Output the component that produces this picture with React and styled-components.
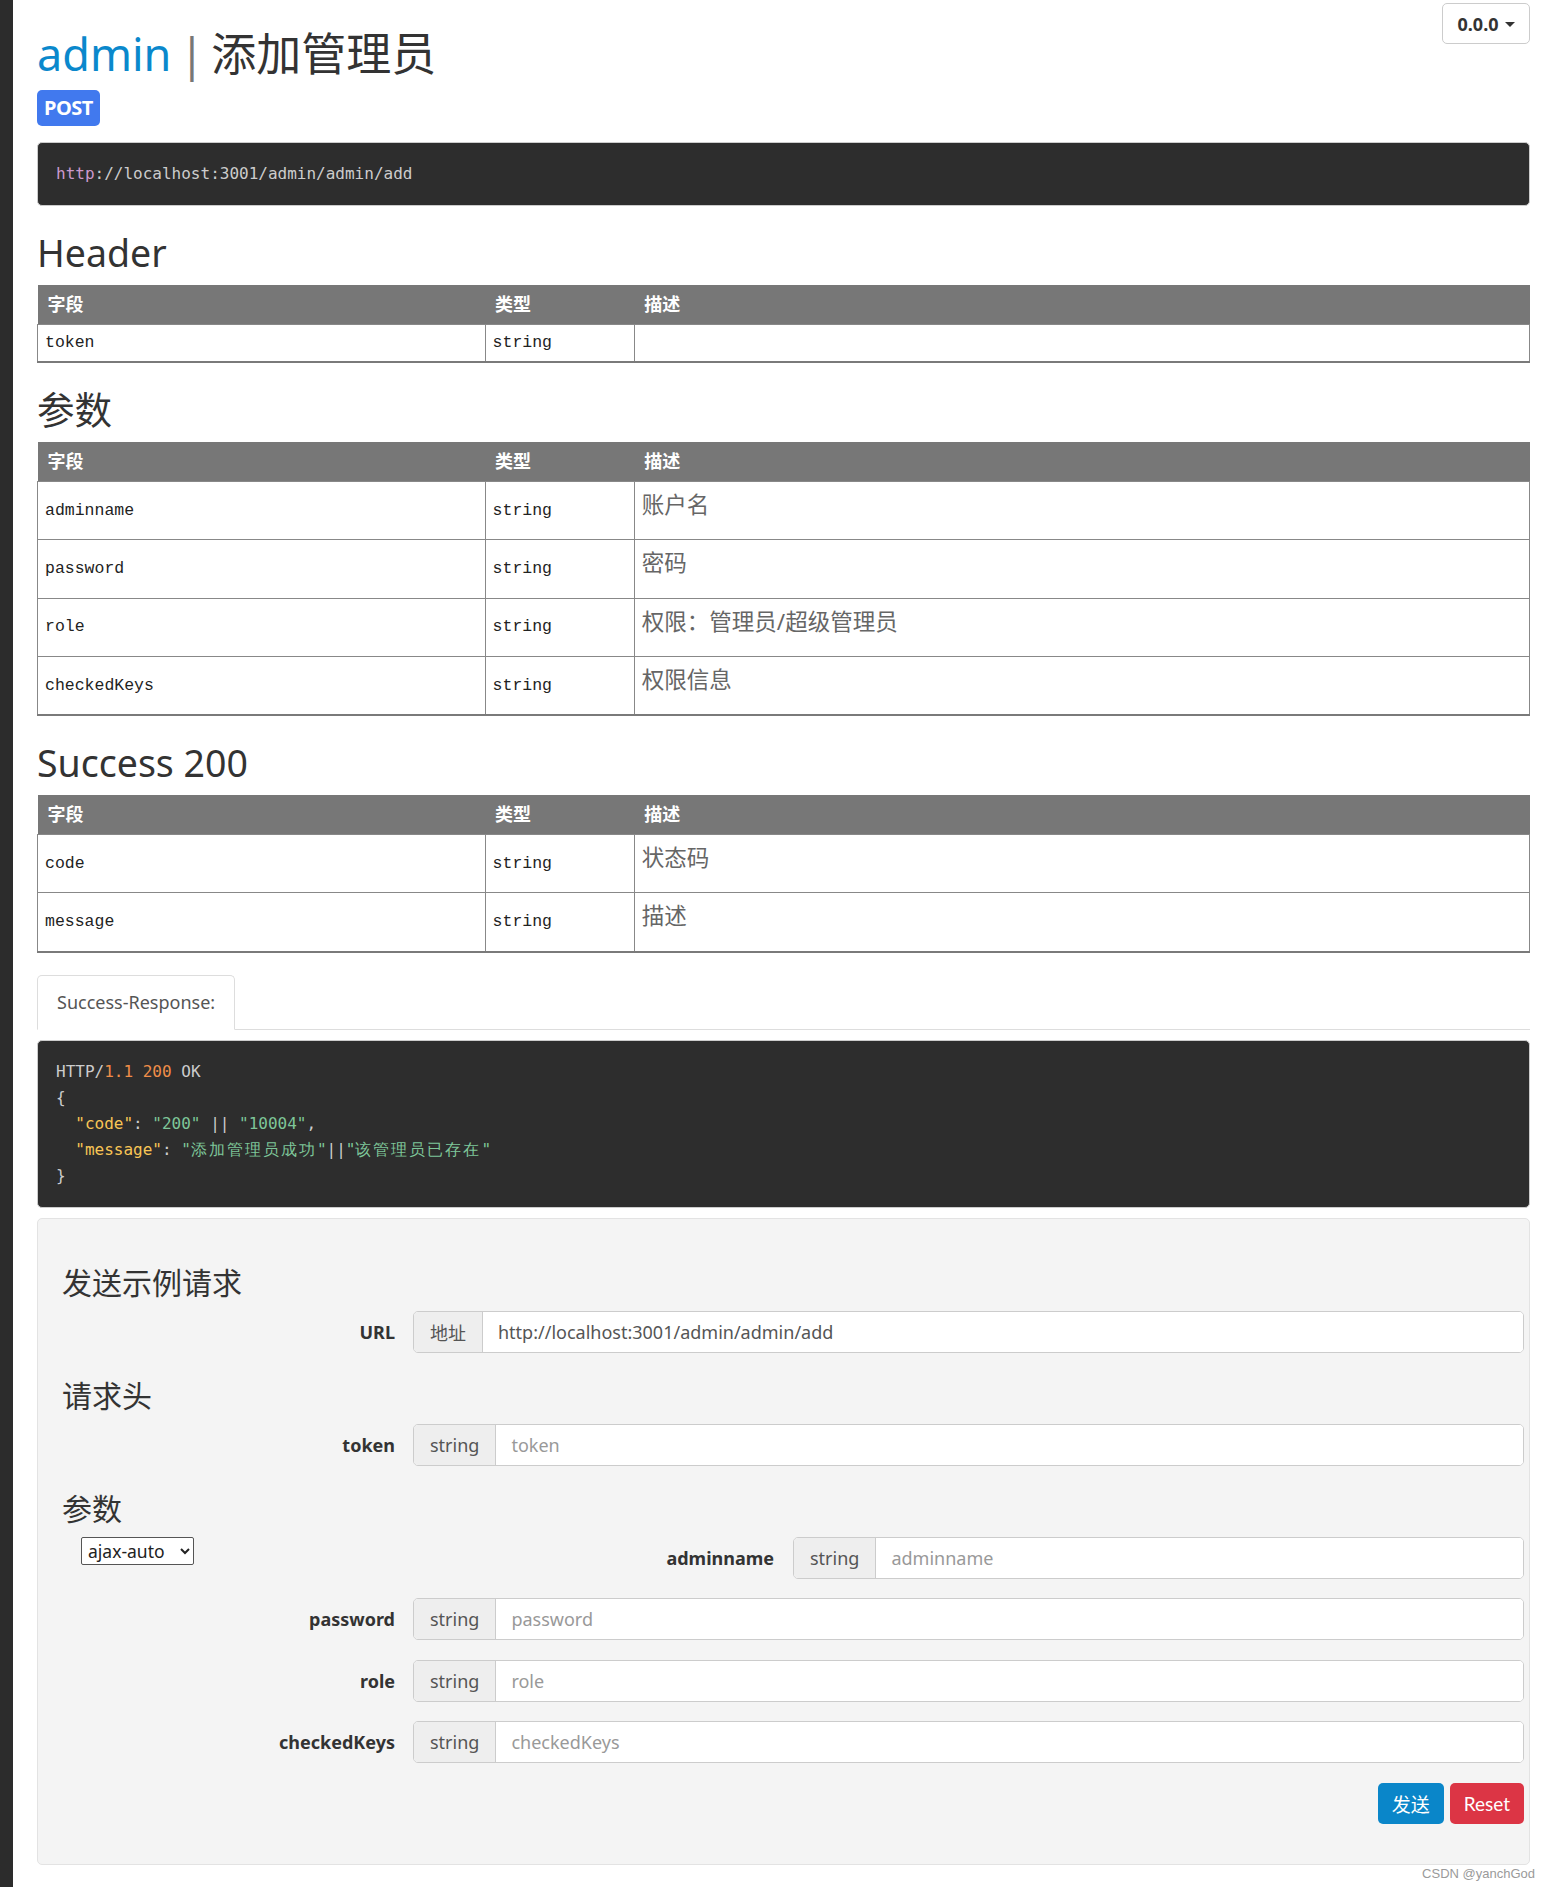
import React from 'react'
import styled, { createGlobalStyle } from 'styled-components'

const GlobalStyle = createGlobalStyle`
  html, body {
    margin: 0;
    padding: 0;
    background: #fff;
    font-family: "Noto Sans", "Noto Sans CJK SC", sans-serif;
    color: #333;
  }
`

const Page = styled.div`
  position: relative;
  display: flex;
  min-height: 1887px;
`

const Sidebar = styled.div`
  width: 13px;
  flex-shrink: 0;
  background: #2c2c2c;
`

const Main = styled.div`
  flex: 1;
  min-width: 0;
  padding: 3px 19px 0 24px;
`

const TopBar = styled.div`
  display: flex;
  justify-content: space-between;
  align-items: flex-start;
`

const Title = styled.h1`
  margin: 26px 0 0;
  font-size: 45px;
  font-weight: 400;
  line-height: 50px;
  color: #333;
`

const Group = styled.span`
  color: #0a88cc;
`

const Sep = styled.span`
  color: #777;
  margin: 0 7px 0 8px;
`

const VersionButton = styled.button`
  display: flex;
  align-items: center;
  gap: 6px;
  height: 41px;
  width: 88px;
  justify-content: center;
  background: #fff;
  border: 1px solid #ccc;
  border-radius: 5px;
  font-family: "Noto Sans", sans-serif;
  font-weight: 700;
  font-size: 18px;
  color: #333;
  padding: 0;
`

const Caret = styled.span`
  width: 0;
  height: 0;
  border-left: 5px solid transparent;
  border-right: 5px solid transparent;
  border-top: 5px solid #333;
  margin-top: 2px;
`

const Badge = styled.span`
  display: inline-block;
  margin-top: 11px;
  padding: 0 7px;
  height: 36px;
  line-height: 36px;
  border-radius: 5px;
  background: #4179ee;
  color: #fff;
  font-weight: 700;
  font-size: 20px;
  letter-spacing: -0.5px;
`

const Pre = styled.pre`
  margin: ${({ $top }) => $top}px 0 0;
  padding: 18px;
  background: #2d2d2d;
  border: 1px solid #ccc;
  border-radius: 5px;
  color: #ccc;
  font-family: "DejaVu Sans Mono", monospace;
  font-size: 16px;
  line-height: 26px;
  white-space: pre;
`

const Tok = styled.span`
  color: ${({ $c }) => $c};
`

// CJK glyphs take two monospace cells in the reference
const Wide = styled.span`
  letter-spacing: 2px;
`

const SectionTitle = styled.h2`
  margin: 26px 0 12px;
  font-size: 37.5px;
  font-weight: 400;
  line-height: 41px;
  color: #333;
`

const Table = styled.table`
  width: 100%;
  border-collapse: collapse;
  border-bottom: 2px solid #7a7a7a;
  table-layout: fixed;
`

const Th = styled.th`
  background: #777;
  color: #fff;
  text-align: left;
  font-size: 18px;
  font-weight: 700;
  padding: 8px 10px;
  line-height: 23px;
`

const Td = styled.td`
  border: 1px solid #888;
  padding: 7px 7px;
  vertical-align: middle;
  font-family: "Liberation Mono", "Noto Sans CJK SC", monospace;
  font-size: 16.5px;
  line-height: 22px;
  color: #222;
`

const Desc = styled.p`
  margin: 0 0 12.3px;
  font-family: "Noto Sans", "Noto Sans CJK SC", sans-serif;
  font-size: 22.5px;
  line-height: 31px;
  color: #666;
`

const Tabs = styled.div`
  margin-top: 22px;
  display: flex;
  border-bottom: 1px solid #ddd;
`

const Tab = styled.div`
  margin-bottom: -1px;
  padding: 0 19px;
  height: 53px;
  line-height: 53px;
  background: #fff;
  border: 1px solid #ddd;
  border-bottom-color: #fff;
  border-radius: 5px 5px 0 0;
  color: #555;
  font-size: 18px;
`

const Well = styled.div`
  margin-top: 10px;
  background: #f4f4f4;
  border: 1px solid #e3e3e3;
  border-radius: 5px;
  padding: 21px 5px 40px 24px;
`

const WellTitle = styled.h3`
  margin: 26px 0 12px;
  font-size: 30px;
  font-weight: 400;
  line-height: 33px;
  color: #333;
`

const FieldRow = styled.div`
  display: grid;
  grid-template-columns: ${({ $label }) => $label}px 1fr;
  column-gap: ${({ $gap }) => $gap || 18}px;
  align-items: center;
  margin-bottom: ${({ $mb }) => ($mb === undefined ? 19.5 : $mb)}px;
`

const Label = styled.label`
  text-align: right;
  font-weight: 700;
  font-size: 18px;
  color: #333;
`

const InputGroup = styled.div`
  display: flex;
  height: 42px;
  border: 1px solid #ccc;
  border-radius: 5px;
  overflow: hidden;
  background: #fff;
  box-sizing: border-box;
`

const Addon = styled.span`
  display: flex;
  align-items: center;
  padding: 0 16px;
  background: #eee;
  border-right: 1px solid #ccc;
  color: #555;
  font-size: 18px;
`

const Input = styled.input`
  flex: 1;
  border: none;
  outline: none;
  background: #fff;
  padding: 0 15px;
  font-family: "Noto Sans", "Noto Sans CJK SC", sans-serif;
  font-size: 18px;
  color: #555;
  &::placeholder {
    color: #999;
  }
`

const SelectCell = styled.div`
  align-self: start;
  padding-left: 19px;
`

const Select = styled.select`
  height: 28px;
  width: 113px;
  font-family: "Noto Sans", sans-serif;
  font-size: 17.5px;
  color: #222;
  background: #fff;
  border: 1px solid #555;
  border-radius: 2px;
  padding: 0 2px;
`

const Actions = styled.div`
  display: flex;
  justify-content: flex-end;
  gap: 6px;
  margin-top: 19px;
`

const Button = styled.button`
  height: 41px;
  padding: 0 14px;
  border: none;
  border-radius: 5px;
  background: ${({ $variant }) => ($variant === 'danger' ? '#dc3545' : '#0a86c9')};
  color: #fff;
  font-family: "Lato", "Noto Sans CJK SC", sans-serif;
  font-size: 19px;
`

const Watermark = styled.div`
  position: absolute;
  right: 14px;
  bottom: 6px;
  font-family: "Liberation Sans", Arial, sans-serif;
  font-size: 13px;
  color: #9a9a9a;
`

const headerRows = [{ field: 'token', type: 'string', desc: '' }]

const paramRows = [
  { field: 'adminname', type: 'string', desc: '账户名' },
  { field: 'password', type: 'string', desc: '密码' },
  { field: 'role', type: 'string', desc: '权限：管理员/超级管理员' },
  { field: 'checkedKeys', type: 'string', desc: '权限信息' },
]

const successRows = [
  { field: 'code', type: 'string', desc: '状态码' },
  { field: 'message', type: 'string', desc: '描述' },
]

const FieldTable = ({ rows }) => (
  <Table>
    <colgroup>
      <col style={{ width: '30%' }} />
      <col style={{ width: '10%' }} />
      <col style={{ width: '60%' }} />
    </colgroup>
    <thead>
      <tr>
        <Th>字段</Th>
        <Th>类型</Th>
        <Th>描述</Th>
      </tr>
    </thead>
    <tbody>
      {rows.map(r => (
        <tr key={r.field}>
          <Td>{r.field}</Td>
          <Td>{r.type}</Td>
          <Td>{r.desc && <Desc>{r.desc}</Desc>}</Td>
        </tr>
      ))}
    </tbody>
  </Table>
)

const Field = ({ name, addon = 'string', value, placeholder }) => (
  <InputGroup>
    <Addon>{addon}</Addon>
    <Input defaultValue={value} placeholder={placeholder ?? name} />
  </InputGroup>
)

const App = () => {
  return (
    <Page>
      <GlobalStyle />
      <Sidebar />
      <Main>
        <TopBar>
          <Title>
            <Group>admin</Group>
            <Sep>|</Sep>添加管理员
          </Title>
          <VersionButton>0.0.0<Caret /></VersionButton>
        </TopBar>
        <Badge>POST</Badge>
        <Pre $top={16}><Tok $c="#cc99cd">http</Tok>://localhost:3001/admin/admin/add</Pre>

        <SectionTitle>Header</SectionTitle>
        <FieldTable rows={headerRows} />

        <SectionTitle>参数</SectionTitle>
        <FieldTable rows={paramRows} />

        <SectionTitle>Success 200</SectionTitle>
        <FieldTable rows={successRows} />

        <Tabs>
          <Tab>Success-Response:</Tab>
        </Tabs>
        <Pre $top={10}>
          HTTP/<Tok $c="#f08d49">1.1</Tok> <Tok $c="#f08d49">200</Tok> OK{'\n'}
          {'{\n  '}
          <Tok $c="#f8c555">"code"</Tok>: <Tok $c="#7ec699">"200"</Tok> || <Tok $c="#7ec699">"10004"</Tok>,{'\n  '}
          <Tok $c="#f8c555">"message"</Tok>: <Tok $c="#7ec699">"<Wide>添加管理员成功</Wide>"</Tok>||<Tok $c="#7ec699">"<Wide>该管理员已存在</Wide>"</Tok>{'\n'}
          {'}'}
        </Pre>

        <Well>
          <WellTitle>发送示例请求</WellTitle>
          <FieldRow $label={333}>
            <Label>URL</Label>
            <Field addon="地址" value="http://localhost:3001/admin/admin/add" placeholder="" />
          </FieldRow>

          <WellTitle>请求头</WellTitle>
          <FieldRow $label={333}>
            <Label>token</Label>
            <Field name="token" />
          </FieldRow>

          <WellTitle>参数</WellTitle>
          <FieldRow $label={333}>
            <SelectCell>
              <Select defaultValue="ajax-auto">
                <option>ajax-auto</option>
                <option>ajax-json</option>
              </Select>
            </SelectCell>
            <FieldRow $label={361} $gap={19} $mb={0}>
              <Label>adminname</Label>
              <Field name="adminname" />
            </FieldRow>
          </FieldRow>
          {['password', 'role', 'checkedKeys'].map(name => (
            <FieldRow key={name} $label={333}>
              <Label>{name}</Label>
              <Field name={name} />
            </FieldRow>
          ))}

          <Actions>
            <Button>发送</Button>
            <Button $variant="danger">Reset</Button>
          </Actions>
        </Well>
      </Main>
      <Watermark>CSDN @yanchGod</Watermark>
    </Page>
  )
}

export default App
